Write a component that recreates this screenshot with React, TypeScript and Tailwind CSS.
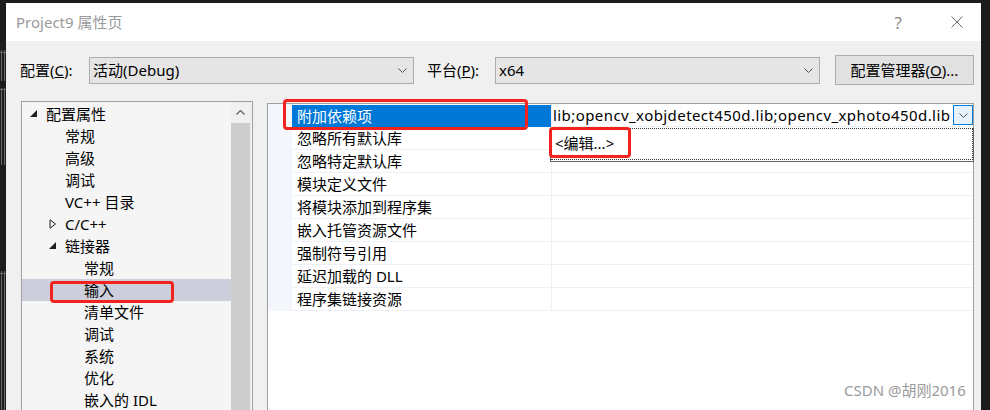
import React from 'react';

const treeItems = [
  { label: '配置属性', level: 0, icon: 'open' },
  { label: '常规', level: 1 },
  { label: '高级', level: 1 },
  { label: '调试', level: 1 },
  { label: 'VC++ 目录', level: 1 },
  { label: 'C/C++', level: 1, icon: 'closed' },
  { label: '链接器', level: 1, icon: 'open' },
  { label: '常规', level: 2 },
  { label: '输入', level: 2, selected: true },
  { label: '清单文件', level: 2 },
  { label: '调试', level: 2 },
  { label: '系统', level: 2 },
  { label: '优化', level: 2 },
  { label: '嵌入的 IDL', level: 2 },
];

const indent = ['pl-[8px]', 'pl-[27px]', 'pl-[46px]'];

const props = [
  '附加依赖项',
  '忽略所有默认库',
  '忽略特定默认库',
  '模块定义文件',
  '将模块添加到程序集',
  '嵌入托管资源文件',
  '强制符号引用',
  '延迟加载的 DLL',
  '程序集链接资源',
];

function Chevron({ className = '' }: { className?: string }) {
  return (
    <svg width="9" height="5" viewBox="0 0 9 5" className={className}>
      <path d="M0.5 0.5 L4.5 4.5 L8.5 0.5" fill="none" stroke="#505050" strokeWidth="1" />
    </svg>
  );
}

function Combo({ value }: { value: string }) {
  return (
    <div className="flex h-[27px] w-[325px] items-center justify-between border border-[#adadad] bg-[#e5e5e5] pl-[3px] pr-[6px]">
      <span>{value}</span>
      <Chevron />
    </div>
  );
}

function TreeIcon({ kind }: { kind?: string }) {
  if (kind === 'open')
    return (
      <svg width="8" height="8" viewBox="0 0 8 8">
        <polygon points="7,0 7,7 0,7" fill="#1e1e1e" />
      </svg>
    );
  if (kind === 'closed')
    return (
      <svg width="8" height="10" viewBox="0 0 8 10">
        <polygon points="1,0.8 6.5,5 1,9.2" fill="none" stroke="#1e1e1e" strokeWidth="1" />
      </svg>
    );
  return null;
}

export default function App() {
  return (
    <div className="relative flex h-[410px] w-[990px] flex-col overflow-hidden bg-[#1c1c1c] pt-[3px] font-['Noto_Sans','Noto_Sans_CJK_SC',sans-serif] text-[15px] leading-none text-black">
      <div className="flex flex-1">
        <div className="w-[6px] shrink-0">
          <svg width="6" height="407" viewBox="0 0 6 407">
            <path d="M1.5 47 V78 M4.5 47 V78 M0 49.5 H6 M1.5 85 V162 M4.5 85 V162 M0 86.5 H6 M1.5 268 V407 M4.5 268 V407 M0 270.5 H6" stroke="#6a6a6a" strokeWidth="1" fill="none" />
          </svg>
        </div>

        <div className="flex w-[975px] shrink-0 flex-col bg-[#f0f0f0]">
          {/* title bar */}
          <div className="flex h-[38px] shrink-0 items-center bg-white pl-[10px]">
            <span className="text-[#9a9a9a]">Project9 属性页</span>
            <span className="ml-auto text-[17px] text-[#8a8a8a]">?</span>
            <svg width="12" height="12" viewBox="0 0 12 12" className="ml-[49px] mr-[18px]">
              <path d="M0.5 0.5 L11.5 11.5 M11.5 0.5 L0.5 11.5" stroke="#6a6a6a" strokeWidth="1" />
            </svg>
          </div>

          {/* config row */}
          <div className="mt-[14px] flex h-[30px] items-center pl-[14px]">
            <span className="w-[69px]">
              配置(<span className="underline">C</span>):
            </span>
            <Combo value="活动(Debug)" />
            <span className="ml-[13px] w-[68px]">
              平台(<span className="underline">P</span>):
            </span>
            <Combo value="x64" />
            <div className="ml-[15px] flex h-[30px] w-[139px] items-center justify-center border border-[#adadad] bg-[#e1e1e1]">
              配置管理器(<span className="underline">O</span>)...
            </div>
          </div>

          {/* content */}
          <div className="mt-[16px] flex flex-1 items-start pl-[15px]">
            {/* tree */}
            <div className="flex h-[320px] w-[232px] shrink-0 border border-[#a0a0a0] bg-[#f5f5f5]">
              <div className="flex flex-1 flex-col pt-[1px]">
                {treeItems.map((item, i) => (
                  <div
                    key={i}
                    className={`flex h-[22px] items-center ${indent[item.level]} ${item.selected ? 'bg-[#cccedb]' : ''}`}
                  >
                    <span className="flex w-[16px] items-center">
                      <TreeIcon kind={item.icon} />
                    </span>
                    <span>{item.label}</span>
                  </div>
                ))}
              </div>
              <div className="flex w-[21px] flex-col bg-[#f0f0f0] pr-[2px]">
                <div className="flex h-[21px] items-center justify-center">
                  <svg width="9" height="5" viewBox="0 0 9 5">
                    <path d="M0.5 4.5 L4.5 0.5 L8.5 4.5" fill="none" stroke="#606060" strokeWidth="1.2" />
                  </svg>
                </div>
                <div className="flex-1 bg-[#cdcdcd]" />
              </div>
            </div>

            {/* property grid */}
            <div className="relative ml-[14px] mt-[2px] h-[320px] w-[707px] shrink-0 border-l border-r border-t border-[#a0a0a0] bg-white">
              {props.map((name, i) => (
                <div key={name} className="flex h-[23px]">
                  <div className="w-[24px] shrink-0 bg-[#f3f6fb]" />
                  <div
                    className={`flex w-[259px] shrink-0 items-center pl-[5px] ${
                      i === 0 ? 'mt-[1px] bg-[#0078d7] text-white' : 'border-b border-[#eef0f5]'
                    }`}
                  >
                    {name}
                  </div>
                  <div className="flex flex-1 items-center border-b border-l border-[#eef0f5]">
                    {i === 0 && (
                      <>
                        <span className="flex-1 whitespace-nowrap pl-[1px] tracking-[0.42px]">
                          lib;opencv_xobjdetect450d.lib;opencv_xphoto450d.lib
                        </span>
                        <div className="flex h-[20px] w-[20px] shrink-0 items-center justify-center border border-[#0078d7] bg-[#e5f1fb]">
                          <Chevron />
                        </div>
                      </>
                    )}
                  </div>
                </div>
              ))}

              {/* dropdown popup */}
              <div className="absolute left-[282px] top-[24px] flex h-[34px] w-[424px] border-b border-l border-r border-[#646464] bg-white pb-[1px]">
                <div className="flex flex-1 items-center border border-dotted border-[#333] pb-[2px] pl-[3px]">
                  &lt;编辑...&gt;
                </div>
              </div>
            </div>
          </div>
        </div>

        <div className="flex-1" />
      </div>

      {/* annotation boxes */}
      <div className="absolute left-[283px] top-[99px] h-[31px] w-[245px] rounded-[4px] border-[3px] border-[#f2221f]" />
      <div className="absolute left-[549px] top-[127px] h-[31px] w-[82px] rounded-[4px] border-[3px] border-[#f2221f]" />
      <div className="absolute left-[50px] top-[281px] h-[22px] w-[124px] rounded-[4px] border-[3px] border-[#f2221f]" />

      <div className="absolute left-[844px] top-[383px] text-[15px] text-[#9b9b9b]">CSDN @胡刚2016</div>
    </div>
  );
}
